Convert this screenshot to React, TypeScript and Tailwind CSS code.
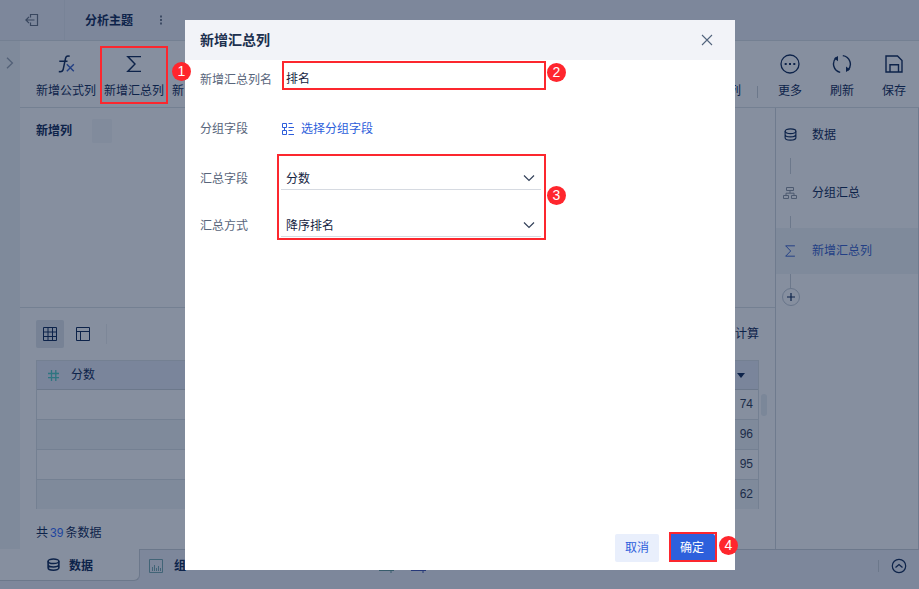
import type { ReactNode } from "react";

const rows = [74, 96, 95, 62];

function Svg({ size, box = 16, className = "", children }: { size: number; box?: number; className?: string; children: ReactNode }) {
    return (
        <svg width={size} height={size} viewBox={`0 0 ${box} ${box}`} fill="none" stroke="currentColor" className={`shrink-0 ${className}`}>
            {children}
        </svg>
    );
}

function Database({ size, strokeWidth = 1.2 }: { size: number; strokeWidth?: number }) {
    return (
        <Svg size={size} box={14}>
            <g strokeWidth={strokeWidth}>
                <ellipse cx="7" cy="3.5" rx="5.8" ry="2.5" />
                <path d="M1.2 3.5v7c0 1.4 2.6 2.6 5.8 2.6s5.8-1.2 5.8-2.6v-7M1.2 7c0 1.4 2.6 2.6 5.8 2.6s5.8-1.2 5.8-2.6" />
            </g>
        </Svg>
    );
}

function Sigma({ size }: { size: number }) {
    return (
        <Svg size={size} box={20}>
            <path d="M17 2.6H3.8L11 10l-7.2 7.4H17" strokeWidth="1.4" />
        </Svg>
    );
}

function Tool({ icon, label, className }: { icon: ReactNode; label: string; className: string }) {
    return (
        <button className={`flex shrink-0 flex-col items-center pt-3 ${className}`}>
            <span className="flex h-[22px] items-center justify-center">{icon}</span>
            <span className="mt-[7px] h-[18px] leading-[18px] whitespace-nowrap">{label}</span>
        </button>
    );
}

function Header() {
    return (
        <header className="flex h-[41px] shrink-0 border-b border-[#748092] bg-[#7d879b]">
            <div className="flex w-[65px] items-center justify-center border-r border-[#788397] text-[#39475f]">
                <Svg size={14} box={14}>
                    <path d="M5.5 4.5v-3h7v11h-7v-3M9.5 7H1M4 3.8.9 7 4 10.2" strokeWidth="1.2" />
                </Svg>
            </div>
            <div className="flex flex-1 items-center pl-5 font-bold">
                <span className="pt-0.5">分析主题</span>
                <Svg size={12} box={12} className="ml-[22px] text-[#2e3d57]">
                    <path d="M6 1.5v2M6 5v2M6 8.5v2" strokeWidth="1.6" />
                </Svg>
            </div>
        </header>
    );
}

function Toolbar() {
    return (
        <div className="-mr-px flex h-[67px] shrink-0 border-b border-[#748092] pl-3">
            <Tool
                className="w-[68px]"
                label="新增公式列"
                icon={
                    <Svg size={18} box={18}>
                        <path d="M12.7 1.3c-2.2-.7-3.7-.1-4.2 2.2L6.2 14.3c-.4 1.9-1.8 2.7-4.4 2.2M2.3 6.2h8.2" strokeWidth="1.5" />
                        <path d="m9.8 9.3 7 7M16.8 9.3l-7 7" stroke="#223f82" strokeWidth="1.4" />
                    </Svg>
                }
            />
            <Tool className="w-[68px]" label="新增汇总列" icon={<Sigma size={20} />} />
            <Tool className="ml-1" label="新" icon={null} />
            <div className="flex-1" />
            <Tool className="mr-4" label="列" icon={null} />
            <i className="mt-[45px] mr-1.5 h-3 w-px bg-[#6c788b]" />
            <Tool
                className="w-[52px]"
                label="更多"
                icon={
                    <Svg size={20} box={20}>
                        <circle cx="10" cy="10" r="9" strokeWidth="1.3" />
                        <path d="M4.7 10h2M9 10h2M13.3 10h2" strokeWidth="1.8" />
                    </Svg>
                }
            />
            <Tool
                className="w-[52px]"
                label="刷新"
                icon={
                    <Svg size={20} box={20}>
                        <path d="M8.2 18.4A8.6 8.6 0 0 1 4.2 3.8M10.8 1.6a8.6 8.6 0 0 1 5 14.6" strokeWidth="1.4" />
                        <path d="M6 2v5.2L2 4.2zM14 18v-5.4l4 3z" fill="currentColor" stroke="none" />
                    </Svg>
                }
            />
            <Tool
                className="w-[52px]"
                label="保存"
                icon={
                    <Svg size={18} box={18}>
                        <path d="M1 1h11.5L17 5.5V17H1zM5 17V9.7h8.5V17" strokeWidth="1.4" />
                    </Svg>
                }
            />
        </div>
    );
}

function DataTable() {
    return (
        <div className="flex">
            <div className="ml-4 h-[149px] w-[723px] overflow-hidden border-x border-t border-[#748092]">
                <div className="flex h-[29px] items-center justify-between border-b border-[#6c788b] bg-[#7a859b] pr-3 pl-2.5">
                    <span className="flex items-center gap-[11px]">
                        <Svg size={13} box={13} className="text-[#2f7581]">
                            <path d="M4.5 1v11M8.8 1v11M1 4.5h11M1 8.7h11" strokeWidth="1.3" />
                        </Svg>
                        <span>分数</span>
                    </span>
                    <i className="mr-px border-x-4 border-t-5 border-x-transparent border-t-[#0d234a]" />
                </div>
                {rows.map((score) => (
                    <div
                        key={score}
                        className="h-[30px] border-b border-[#748092] pr-[5px] text-right leading-[29px] text-[#1b2c49] last:border-b-0 odd:bg-[#7f8a9b] even:bg-[#868f9f]">
                        {score}
                    </div>
                ))}
            </div>
            <div className="mt-[34px] ml-0.5 h-[22px] w-1.5 rounded-full bg-[#7b8799]" />
        </div>
    );
}

function Steps() {
    return (
        <aside className="flex w-[144px] flex-col border-x border-[#6f7b8e]">
            <div className="mt-[11px] flex h-[31px] items-center gap-[15px] pl-2">
                <Database size={13} />
                <span>数据</span>
            </div>
            <i className="mt-2 ml-3.5 h-4 w-px bg-[#6c788b]" />
            <div className="mt-[3px] flex h-[31px] items-center gap-[15px] pl-[7px]">
                <Svg size={14} box={14} className="text-[#4d5a70]">
                    <path d="M3.5 1.5h7v3h-7zM.5 9.5h5v3h-5zM8.5 9.5h5v3h-5zM7 4.5v2.5M3 9.5V7.2h8v2.3" />
                </Svg>
                <span>分组汇总</span>
            </div>
            <i className="mt-2 ml-3.5 h-3 w-px bg-[#6c788b]" />
            <div className="flex h-[46px] items-center gap-[15px] bg-[#7f8a9b] pl-[7px] text-[#233f85]">
                <Sigma size={14} />
                <span>新增汇总列</span>
            </div>
            <i className="ml-3.5 h-3.5 w-px bg-[#6c788b]" />
            <div className="ml-1.5 flex size-[18px] items-center justify-center rounded-full border border-[#68758a]">
                <Svg size={8} box={8}>
                    <path d="M4 0v8M0 4h8" strokeWidth="1.2" />
                </Svg>
            </div>
        </aside>
    );
}

function Workspace() {
    return (
        <div className="flex min-h-0 flex-1">
            <section className="flex w-[755px] flex-col">
                <div className="flex h-[200px] shrink-0 border-b border-[#748092] pt-[11px] pl-4">
                    <span className="h-6 leading-6 font-bold">新增列</span>
                    <span className="ml-5 h-6 w-5 rounded-xs bg-[#818b9c]" />
                </div>
                <div className="mt-3 flex h-7 shrink-0 items-center px-4">
                    <span className="flex size-7 items-center justify-center rounded-xs bg-[#778295]">
                        <Svg size={14} box={14}>
                            <path d="M.5.5h13v13H.5zM5 0v14M9.5 0v14M0 5h14M0 9.5h14" />
                        </Svg>
                    </span>
                    <Svg size={14} box={14} className="ml-3">
                        <path d="M.5.5h13v13H.5zM0 4.5h14M4.5 5v9" />
                    </Svg>
                    <i className="ml-4 h-5 w-px bg-[#7d8798]" />
                    <span className="ml-auto">计算</span>
                </div>
                <div className="mt-3">
                    <DataTable />
                </div>
                <p className="mt-[15px] ml-4 leading-[18px]">
                    共<span className="mx-0.5 text-[#1e46a0]">39</span>条数据
                </p>
            </section>
            <Steps />
        </div>
    );
}

function TabBar() {
    return (
        <footer className="flex h-10 shrink-0 bg-[#7d879b]">
            <div className="flex h-8 w-[140px] items-center gap-[9px] rounded-br-md border-r border-b border-[#6c788b] bg-[#868f9f] pl-[47px] font-bold">
                <Database size={13} strokeWidth={1.7} />
                <span className="pt-0.5">数据</span>
            </div>
            <div className="flex h-8 flex-1 items-center border-t border-[#6c788b] pl-[9px] font-bold">
                <Svg size={14} box={14} className="text-[#416477]">
                    <path d="M.5.5h13v13H.5zM3.5 8v4M5.5 6v6M7.5 9v3M9.5 7v5M11.5 9v3" />
                </Svg>
                <span className="ml-[11px]">组</span>
                <Svg size={16} className="ml-[193px] text-[#385c6c]">
                    <path d="M1.5 12.5v-11h12v11M0 12.5h15M12 12.5v2.5" />
                </Svg>
                <Svg size={16} className="ml-4 text-[#263879]">
                    <path d="M1.5 12.5v-11h12v11M0 12.5h15M12 12.5v2.5" />
                </Svg>
                <i className="ml-auto h-3 w-px bg-[#6c788b]" />
                <Svg size={16} className="mx-3">
                    <circle cx="8" cy="8" r="6.7" strokeWidth="1.2" />
                    <path d="m4.5 9.5 3.5-3 3.5 3" strokeWidth="1.3" />
                </Svg>
            </div>
        </footer>
    );
}

function Select({ value }: { value: string }) {
    return (
        <div className="flex h-6 w-[260px] items-center justify-between border-b border-[#d6dae1] pr-1.5 pl-[5px] text-[#14233f]">
            <span className="pt-0.5">{value}</span>
            <Svg size={12} box={12} className="text-[#33415a]">
                <path d="m1 3.5 5 5 5-5" strokeWidth="1.2" />
            </Svg>
        </div>
    );
}

function SummaryDialog() {
    return (
        <div className="absolute top-5 left-[185px] flex h-[550px] w-[550px] flex-col bg-white text-[#58657b]">
            <div className="flex h-10 items-center justify-between bg-[#f2f3f8] pr-[22px] pl-[15px] text-sm font-bold text-[#1d304f]">
                新增汇总列
                <Svg size={12} box={12} className="text-[#52647d]">
                    <path d="m1 1 10 10M11 1 1 11" strokeWidth="1.1" />
                </Svg>
            </div>
            <div className="flex h-10 items-center pl-[15px]">
                <span className="w-[86px]">新增汇总列名</span>
                <span className="-mt-0.5 text-[#14233f]">排名</span>
            </div>
            <div className="mt-4 flex h-6 items-center pl-[15px]">
                <span className="w-[81px] pt-0.5">分组字段</span>
                <span className="flex items-center gap-[7px] text-[#2d5edb]">
                    <Svg size={13} box={13}>
                        <path d="M1.5 1.5h4v4h-4zM1.5 8.5h4v4h-4zM3.5 5.5v3M7.5 1.5h4M7.5 5.5H13M7.5 8.5h4M7.5 12.5H13" />
                    </Svg>
                    <span className="pt-0.5">选择分组字段</span>
                </span>
            </div>
            <div className="mt-[26px] flex h-6 items-center pl-[15px]">
                <span className="w-[81px] pt-0.5">汇总字段</span>
                <Select value="分数" />
            </div>
            <div className="mt-[23px] flex h-6 items-center pl-[15px]">
                <span className="w-[81px] pt-0.5">汇总方式</span>
                <Select value="降序排名" />
            </div>
            <div className="mt-auto mr-5 mb-2 flex items-center justify-end gap-2.5">
                <button className="h-7 w-11 rounded-xs bg-[#e9effc] text-[#2d5edb]">取消</button>
                <button className="h-7 w-[46px] rounded-xs bg-[#2d60dc] text-white">确定</button>
            </div>
        </div>
    );
}

function Badge({ n, className }: { n: number; className: string }) {
    return (
        <span className={`absolute flex size-[19px] items-center justify-center rounded-full bg-[#ff262d] text-[14px] text-white ${className}`}>
            {n}
        </span>
    );
}

export default function App() {
    return (
        <main className="relative flex h-[589px] w-[919px] flex-col overflow-hidden bg-[#868f9f] font-['Liberation_Sans','Noto_Sans_CJK_SC',sans-serif] text-xs text-[#0d234a]">
            <Header />
            <div className="flex min-h-0 flex-1">
                <div className="w-5 shrink-0 bg-[#7f8a9b] pt-4 pl-1 text-[#526077]">
                    <Svg size={12} box={12}>
                        <path d="m3 .8 5.4 5.2L3 11.2" strokeWidth="1.3" />
                    </Svg>
                </div>
                <div className="flex min-w-0 flex-1 flex-col">
                    <Toolbar />
                    <Workspace />
                </div>
            </div>
            <TabBar />
            <SummaryDialog />
            <div className="absolute top-[46px] left-[100px] h-[58px] w-[68px] border-2 border-[#fc272e]" />
            <div className="absolute top-[61px] left-[282px] h-[29px] w-[264px] border-2 border-[#fc272e]" />
            <div className="absolute top-[154px] left-[277px] h-[86px] w-[269px] border-2 border-[#fc272e]" />
            <div className="absolute top-[532px] left-[669px] h-[30px] w-[48px] border-2 border-[#fc272e]" />
            <Badge n={1} className="top-[62px] left-[172px]" />
            <Badge n={2} className="top-[63px] left-[547px]" />
            <Badge n={3} className="top-[186px] left-[547px]" />
            <Badge n={4} className="top-[536px] left-[719px]" />
        </main>
    );
}
